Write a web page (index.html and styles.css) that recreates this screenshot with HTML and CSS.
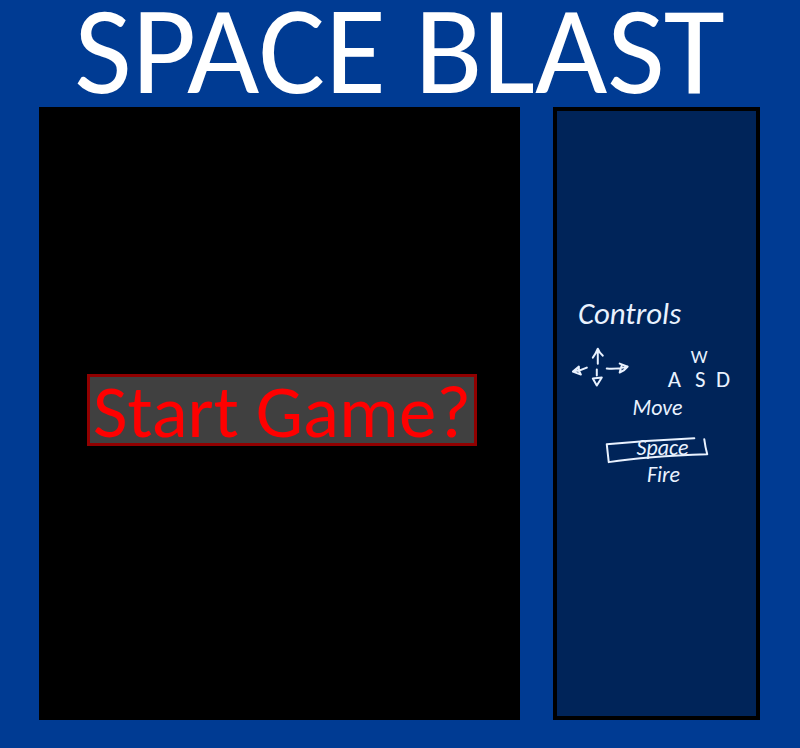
FILE: index.html
```html
<!DOCTYPE html>
<html lang="en">
<head>
<meta charset="utf-8">
<meta name="viewport" content="width=device-width, initial-scale=1">
<title>Space Blast</title>
<link rel="stylesheet" href="styles.css">
</head>
<body>
<h1 class="title">SPACE BLAST</h1>
<main class="stage">
  <section class="playfield">
    <button class="start" type="button">Start Game?</button>
  </section>
  <aside class="panel">
    <svg class="controls" viewBox="0 -10 200 210">
      <text class="heading" x="21" y="23">Controls</text>
      <g class="ink">
        <path d="M41 63 L41 48 M36 57 Q39 53 41 48 Q43 53 46 55"/>
        <path d="M30 67 Q24 70 16 71 L22 66 Q21 70 24 74 L16 71"/>
        <path d="M50 68 Q60 69 71 66 L63 63 M71 66 Q68 70 63 72 L65 65"/>
        <path d="M40 69 L40 75 M36 78 L45 77 L40 85 Z"/>
        <path d="M138 138 Q95 140 50 144 L52 162 Q90 156 151 154 Q149 147 148 139"/>
      </g>
      <g class="key">
        <text class="up" x="143" y="62">W</text>
        <text x="118" y="87">A</text>
        <text x="144" y="87">S</text>
        <text x="167" y="87">D</text>
      </g>
      <g class="word">
        <text x="101" y="115">Move</text>
        <text x="106" y="155">Space</text>
        <text x="107" y="182">Fire</text>
      </g>
    </svg>
  </aside>
</main>
</body>
</html>
```
FILE: styles.css
```css
* { box-sizing: border-box; }

body {
  margin: 0;
  min-height: 100vh;
  padding: 0 40px 28px 39px;
  display: flex;
  flex-direction: column;
  background: #003b93;
  font-family: Carlito, Lato, "Open Sans", sans-serif;
}

.title {
  margin: 0;
  padding-bottom: 6px;
  color: #fff;
  font-size: 125px;
  font-weight: 400;
  line-height: 101px;
  text-align: center;
  white-space: nowrap;
}

.stage {
  flex: 1;
  display: grid;
  grid-template-columns: 481fr 207fr;
  gap: 33px;
}

.playfield {
  display: flex;
  align-items: center;
  justify-content: center;
  padding: 0 0 7px 5px;
  background: #000;
}

.start {
  padding: 3px 3px 0;
  border: 3px solid #910000;
  background: #404040;
  color: #f00;
  font: inherit;
  font-size: 75px;
  line-height: 63px;
  white-space: nowrap;
  cursor: pointer;
}

.panel {
  display: flex;
  align-items: center;
  padding-bottom: 37px;
  border: 4px solid #000;
  background: #002459;
}

.controls {
  width: 100%;
  fill: #e9f2ff;
  font-style: italic;
}

.ink {
  fill: none;
  stroke: #e9f2ff;
  stroke-width: 2;
  stroke-linecap: round;
  stroke-linejoin: round;
}

.heading { font-size: 31px; }

.key {
  font-size: 23px;
  font-style: normal;
  text-anchor: middle;
}

.up { font-size: 19px; }

.word {
  font-size: 22px;
  text-anchor: middle;
}
```
